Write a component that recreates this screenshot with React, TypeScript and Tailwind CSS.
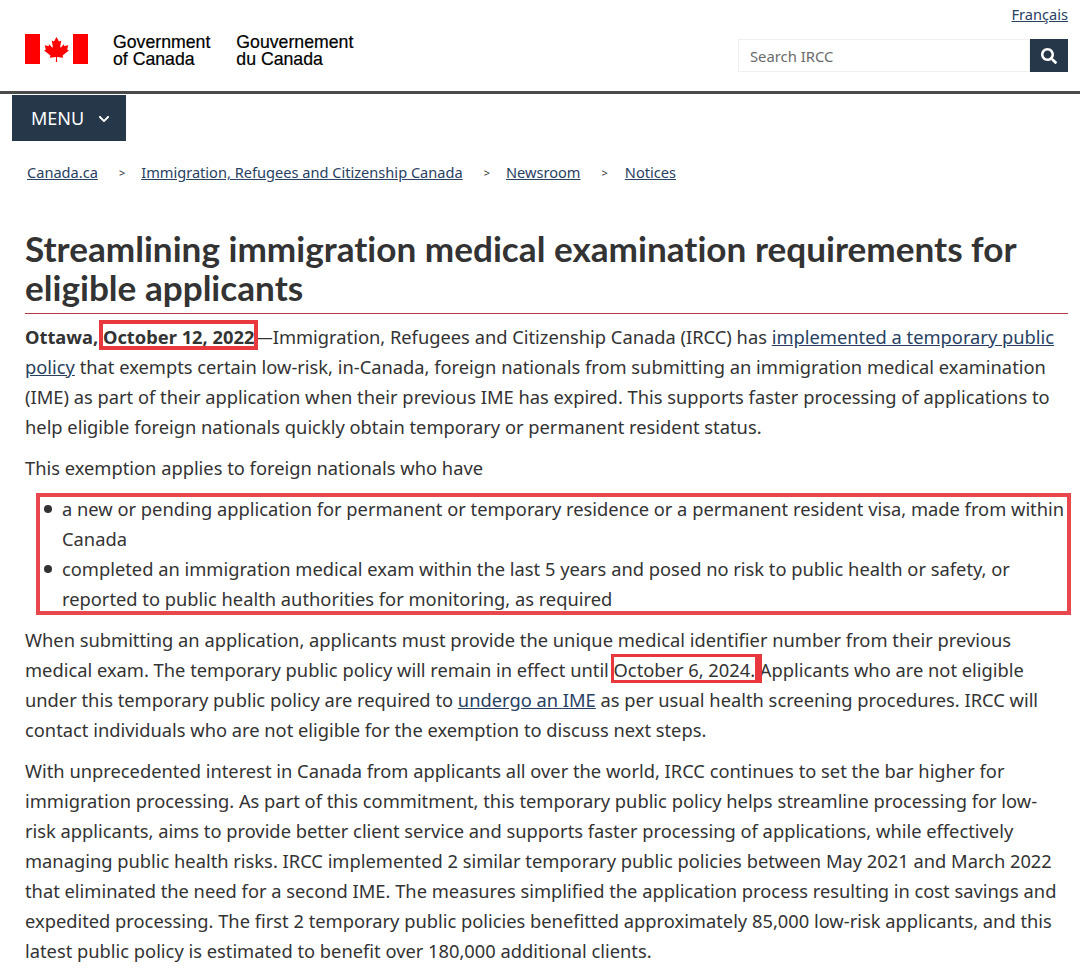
import { FaChevronDown, FaSearch } from "react-icons/fa";

const linkClass = "text-[#284162] underline";

// Red annotation drawn over the screenshot text
const Mark = ({ children, wide }: { children: React.ReactNode; wide?: boolean }) => (
  <span className="relative">
    <span
      className={`absolute border-[#e8383d] ${
        wide
          ? "-left-[3px] -right-[7px] top-[-3px] bottom-[-1px] border-[3px] border-r-[7px]"
          : "-left-[4px] -right-[4px] top-[-4px] bottom-[-1px] border-[4px]"
      }`}
    />
    {children}
  </span>
);

const Flag = () => (
  <svg width="63" height="30" viewBox="0 0 63 30" className="shrink-0">
    <rect x="0" y="0" width="15" height="30" fill="#f00" />
    <rect x="48" y="0" width="15" height="30" fill="#f00" />
    <path
      fill="#f00"
      d="M31.500 3l-2.200 4c-.3.400-.7.400-1.100.2l-1.500-.8 1.100 6.200c.2 1.100-.5 1.100-.9.600l-2.700-3-.4 1.500c-.1.300-.3.400-.7.300l-3.400-.7.900 3.300c.2.700.3 1.100-.3 1.300l-1.200.6 6 4.800c.2.200.3.500.2.800l-.5 1.700 5.900-.7c.2 0 .4.200.4.400L30.800 28h1.400l-.3-4.500c0-.2.200-.4.400-.4l5.900.7-.5-1.700c-.1-.3 0-.6.200-.8l6-4.800-1.200-.6c-.6-.2-.5-.6-.3-1.300l.9-3.300-3.400.7c-.4.100-.6 0-.7-.3l-.4-1.500-2.700 3c-.4.500-1.100.5-.9-.6l1.100-6.200-1.500.8c-.4.200-.8.200-1.100-.2z"
    />
  </svg>
);

const Bullet = () => <span className="shrink-0 w-[8px] h-[8px] mt-[11px] mr-[10px] rounded-full bg-[#333]" />;

export default function App() {
  return (
    <div className="w-[1080px] h-[972px] overflow-hidden bg-white font-['Noto_Sans',sans-serif] text-[#333]">
      <header className="h-[94px] border-b-[3px] border-[#4a4a4a] flex justify-between pl-[25px] pr-[12px]">
        <div className="flex items-start pt-[34px]">
          <Flag />
          <div className="ml-[25px] font-['Liberation_Sans',sans-serif] text-[17.700px] leading-[17px] text-black [-webkit-text-stroke:0.2px_black]">
            Government
            <br />
            of Canada
          </div>
          <div className="ml-[26px] font-['Liberation_Sans',sans-serif] text-[17.700px] leading-[17px] text-black [-webkit-text-stroke:0.2px_black]">
            Gouvernement
            <br />
            du Canada
          </div>
        </div>
        <div className="flex flex-col items-end pt-[4px]">
          <a className={`${linkClass} text-[14.600px] leading-[20px]`}>Français</a>
          <div className="flex mt-[15px] h-[33px]">
            <div className="w-[292px] border border-[#f0f0f0] pl-[11px] text-[14.800px] leading-[32px] text-[#6b6b6b]">
              Search IRCC
            </div>
            <div className="w-[38px] bg-[#26374a] flex items-center justify-center">
              <FaSearch size={16} className="text-white" />
            </div>
          </div>
        </div>
      </header>

      <div className="ml-[12px] mt-[1px] w-[114px] h-[46px] bg-[#26374a] text-white flex items-center pl-[19px] text-[18px]">
        MENU
        <FaChevronDown size={12} className="ml-[14px] mt-[1px]" />
      </div>

      <nav className="flex items-center pl-[27px] mt-[20px] h-[24px] text-[14.600px]">
        <a className={linkClass}>Canada.ca</a>
        <span className="ml-[21px] mr-[16px] text-[11px]">&gt;</span>
        <a className={linkClass}>Immigration, Refugees and Citizenship Canada</a>
        <span className="ml-[21px] mr-[16px] text-[11px]">&gt;</span>
        <a className={linkClass}>Newsroom</a>
        <span className="ml-[21px] mr-[17px] text-[11px]">&gt;</span>
        <a className={linkClass}>Notices</a>
      </nav>

      <main className="pl-[25px] pr-[12px] text-[18.310px] leading-[30px]">
        <h1 className="mt-[44px] pb-[6px] border-b border-[#af3c43] font-['Lato',sans-serif] font-bold text-[35.150px] leading-[39px] text-[#333] whitespace-nowrap [font-variant-ligatures:none]">
          Streamlining immigration medical examination requirements for
          <br />
          eligible applicants
        </h1>

        <p className="mt-[8px] whitespace-nowrap">
          <strong>Ottawa, </strong>
          <Mark>
            <strong>October 12, 2022</strong>
          </Mark>
          —Immigration, Refugees and Citizenship Canada (IRCC) has{" "}
          <a className={linkClass}>implemented a temporary public</a>
          <br />
          <a className={linkClass}>policy</a> that exempts certain low-risk, in-Canada, foreign nationals from submitting an immigration medical examination
          <br />
          (IME) as part of their application when their previous IME has expired. This supports faster processing of applications to
          <br />
          help eligible foreign nationals quickly obtain temporary or permanent resident status.
        </p>

        <p className="mt-[11px]">This exemption applies to foreign nationals who have</p>

        <div className="relative mt-[11px] whitespace-nowrap">
          <div className="absolute left-[11px] right-[-3px] top-[-1px] bottom-[-1px] border-[4px] border-[#e8484d]" />
          <ul className="pl-[19px]">
            <li className="flex">
              <Bullet />
              <div>
                a new or pending application for permanent or temporary residence or a permanent resident visa, made from within
                <br />
                Canada
              </div>
            </li>
            <li className="flex">
              <Bullet />
              <div>
                completed an immigration medical exam within the last 5 years and posed no risk to public health or safety, or
                <br />
                reported to public health authorities for monitoring, as required
              </div>
            </li>
          </ul>
        </div>

        <p className="mt-[11px] whitespace-nowrap">
          When submitting an application, applicants must provide the unique medical identifier number from their previous
          <br />
          medical exam. The temporary public policy will remain in effect until <Mark wide>October 6, 2024.</Mark> Applicants who are not eligible
          <br />
          under this temporary public policy are required to <a className={linkClass}>undergo an IME</a> as per usual health screening procedures. IRCC will
          <br />
          contact individuals who are not eligible for the exemption to discuss next steps.
        </p>

        <p className="mt-[11px] whitespace-nowrap">
          With unprecedented interest in Canada from applicants all over the world, IRCC continues to set the bar higher for
          <br />
          immigration processing. As part of this commitment, this temporary public policy helps streamline processing for low-
          <br />
          risk applicants, aims to provide better client service and supports faster processing of applications, while effectively
          <br />
          managing public health risks. IRCC implemented 2 similar temporary public policies between May 2021 and March 2022
          <br />
          that eliminated the need for a second IME. The measures simplified the application process resulting in cost savings and
          <br />
          expedited processing. The first 2 temporary public policies benefitted approximately 85,000 low-risk applicants, and this
          <br />
          latest public policy is estimated to benefit over 180,000 additional clients.
        </p>
      </main>
    </div>
  );
}
